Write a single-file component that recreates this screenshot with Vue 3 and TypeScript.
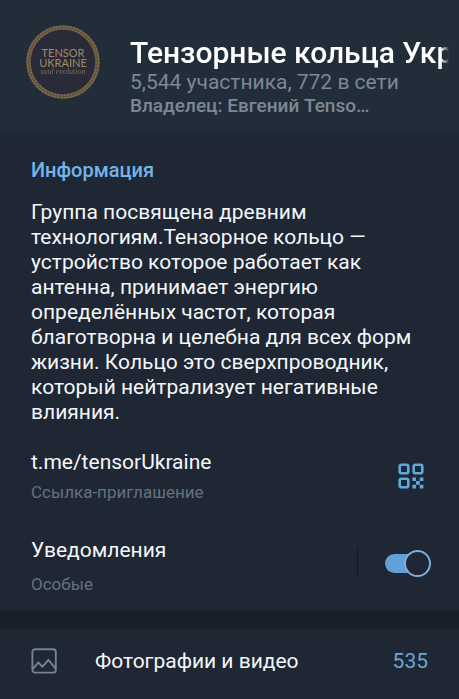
<script setup lang="ts">
import { ref } from 'vue'

const notifications = ref(true)
const about =
  'Группа посвящена древним технологиям.Тензорное кольцо — устройство которое работает как антенна, принимает энергию определённых частот, которая благотворна и целебна для всех форм жизни. Кольцо это сверхпроводник, который нейтрализует негативные влияния.'
</script>

<template>
  <main class="profile">
    <header class="head">
      <svg class="avatar" viewBox="0 0 76 76" aria-hidden="true">
        <circle cx="38" cy="38" r="37.5" fill="#2b2e38" />
        <circle cx="38" cy="38" r="34.5" fill="#292b38" stroke="#5f523f" stroke-width="4.6" />
        <circle cx="38" cy="38" r="35.8" fill="none" stroke="#86724e" stroke-width="1.2" stroke-dasharray="2.4 1.1" />
        <circle cx="38" cy="38" r="33.2" fill="none" stroke="#86724e" stroke-width="1.2" stroke-dasharray="1.8 1.5" />
        <g fill="#a08a66" text-anchor="middle">
          <text class="logo-name" x="38" y="33" font-size="11">TENSOR</text>
          <text class="logo-name" x="38" y="43" font-size="11">UKRAINE</text>
          <text class="logo-motto" x="38" y="50" font-size="8">soul evolution</text>
        </g>
      </svg>
      <div class="titles">
        <h1 class="title">Тензорные кольца Укр</h1>
        <p class="members">5,544 участника, 772 в сети</p>
        <p class="owner">Владелец: Евгений Tenso…</p>
      </div>
    </header>

    <section class="info">
      <h2 class="heading">Информация</h2>
      <p class="about">{{ about }}</p>

      <div class="row">
        <div class="cell">
          <a class="primary" href="#invite">t.me/tensorUkraine</a>
          <span class="secondary">Ссылка-приглашение</span>
        </div>
        <button class="qr" type="button" aria-label="QR">
          <svg viewBox="0 0 26 26" width="26" height="26" fill="none" stroke="#62a8e0" stroke-width="2.6">
            <rect x="1.7" y="1.7" width="8.6" height="8.6" rx="1.8" />
            <rect x="15.7" y="1.7" width="8.6" height="8.6" rx="1.8" />
            <rect x="1.7" y="15.7" width="8.6" height="8.6" rx="1.8" />
            <path
              fill="#62a8e0"
              stroke="none"
              d="M14.4 14.4h3.6v3.6h-3.6zM21.8 14.4h3.6v3.6h-3.6zM18 18h3.8v3.8h-3.8zM14.4 21.8h3.6v3.6h-3.6zM21.8 21.8h3.6v3.6h-3.6z"
            />
          </svg>
        </button>
      </div>

      <div class="row notify">
        <label class="cell" for="notifications">
          <span class="primary">Уведомления</span>
          <span class="secondary">Особые</span>
        </label>
        <div class="controls">
          <span class="divider"></span>
          <input id="notifications" v-model="notifications" class="switch" type="checkbox" role="switch" />
        </div>
      </div>
    </section>

    <a class="media" href="#media">
      <svg class="media-icon" viewBox="0 0 26 26" fill="none" stroke="#778391" stroke-width="1.9" stroke-linejoin="round">
        <rect x="1.4" y="1.2" width="23.4" height="23.4" rx="2.6" />
        <path d="M2 20.8 7.4 14.4l4 4.4 6-7L24.4 20.4" />
      </svg>
      <span class="media-name">Фотографии и видео</span>
      <span class="count">535</span>
    </a>
  </main>
</template>

<style>
body {
  margin: 0;
  background: #1e2733;
}
</style>

<style scoped>
.profile {
  min-height: 100vh;
  background: #1e2733;
  color: #f4f7fa;
  font-family: Roboto, 'Noto Sans', sans-serif;
}

h1,
h2,
p {
  margin: 0;
  font-weight: 400;
}

.head {
  display: flex;
  align-items: flex-start;
  gap: 29px;
  padding: 24px 10px 14px 25px;
  background: #222d3a;
}

.avatar {
  flex: none;
  width: 76px;
  height: 76px;
}

.logo-name {
  font-family: Lato, sans-serif;
}

.logo-motto {
  font-family: 'Liberation Serif', serif;
  font-style: italic;
  opacity: 0.7;
}

.titles {
  flex: 1;
  min-width: 0;
  padding-top: 12px;
}

.title {
  overflow: hidden;
  white-space: nowrap;
  font-size: 30px;
  line-height: 34px;
  font-weight: 500;
  color: #ffffff;
  mask-image: linear-gradient(to left, transparent, #000 8px);
}

.members {
  font-size: 21px;
  line-height: 24px;
  color: #7c8896;
}

.owner {
  font-size: 19px;
  line-height: 23px;
  font-weight: 500;
  color: #7c8896;
}

.info {
  padding: 27px 28px 15px 31px;
  border-bottom: 19px solid #18202a;
}

.heading {
  font-size: 20px;
  line-height: 24px;
  font-weight: 500;
  color: #73b4ec;
}

.about {
  margin-top: 18px;
  font-size: 21px;
  line-height: 25px;
}

.row {
  display: flex;
  align-items: center;
  margin-top: 23px;
}

.cell {
  display: flex;
  flex: 1;
  flex-direction: column;
  gap: 5px;
}

.notify {
  align-items: flex-start;
  margin-top: 33px;
}

.notify .cell {
  gap: 9px;
}

.primary {
  font-size: 21px;
  line-height: 28px;
  color: #f4f7fa;
  text-decoration: none;
}

.secondary {
  font-size: 17px;
  line-height: 22px;
  color: #66717e;
}

.qr {
  display: flex;
  margin-right: 7px;
  padding: 0;
  border: 0;
  background: none;
  cursor: pointer;
}

.controls {
  display: flex;
  align-items: center;
  height: 54px;
}

.divider {
  width: 1px;
  height: 30px;
  margin-right: 27px;
  background: #111820;
}

.switch {
  display: grid;
  align-items: center;
  appearance: none;
  width: 46px;
  height: 27px;
  margin: 0;
  cursor: pointer;
}

.switch::before,
.switch::after {
  content: '';
  grid-area: 1 / 1;
  box-sizing: border-box;
}

.switch::before {
  height: 19px;
  margin-right: 6px;
  border-radius: 10px;
  background: #62a0d8;
}

.switch::after {
  width: 27px;
  height: 27px;
  border: 2px solid #7cb0de;
  border-radius: 50%;
  background: #1e2733;
}

.switch:checked::after {
  justify-self: end;
}

.media {
  display: flex;
  align-items: center;
  padding: 16px 31px 22px;
  color: #f4f7fa;
  font-size: 21px;
  line-height: 32px;
  text-decoration: none;
}

.media-icon {
  flex: none;
  width: 26px;
  height: 26px;
  margin-right: 38px;
}

.media-name {
  flex: 1;
}

.count {
  color: #6ba6d6;
}
</style>
